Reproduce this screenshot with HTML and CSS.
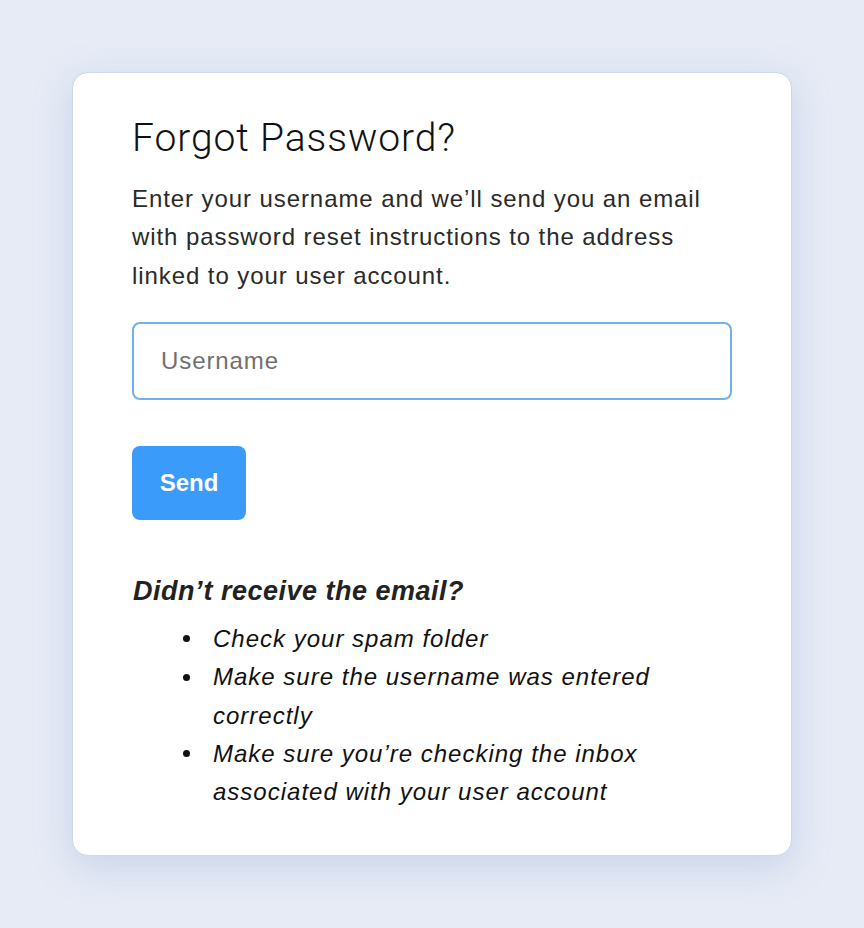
FILE: index.html
```html
<!DOCTYPE html>
<html lang="en">
<head>
<meta charset="utf-8">
<title>Forgot Password</title>
<link rel="stylesheet" href="styles.css">
</head>
<body>
<main class="page">
  <section class="card">
    <h1 class="title">Forgot Password?</h1>
    <p class="intro">Enter your username and we’ll send you an email with password reset instructions to the address linked to your user account.</p>
    <input class="field" type="text" placeholder="Username">
    <button class="send" type="button">Send</button>
    <h2 class="help-title">Didn’t receive the email?</h2>
    <ul class="help-list">
      <li>Check your spam folder</li>
      <li>Make sure the username was entered correctly</li>
      <li>Make sure you’re checking the inbox associated with your user account</li>
    </ul>
  </section>
</main>
</body>
</html>
```

FILE: styles.css
```css
html, body {
  margin: 0;
  padding: 0;
}
body {
  background: #e6ebf6;
  font-family: "Liberation Sans", Arial, sans-serif;
  color: #222;
}
.page {
  padding: 72px;
  min-height: 928px;
  box-sizing: border-box;
}
.card {
  width: 720px;
  height: 784px;
  box-sizing: border-box;
  background: #fff;
  border: 1px solid #cdd6ea;
  border-radius: 16px;
  box-shadow: 0 10px 36px rgba(150, 165, 205, 0.35);
  padding: 42px 59px 0;
  display: flex;
  flex-direction: column;
  align-items: stretch;
}
.title {
  margin: 0;
  font-family: Roboto, "Liberation Sans", sans-serif;
  font-weight: 300;
  font-size: 39px;
  line-height: 46px;
  letter-spacing: 0.9px;
  color: #111;
}
.intro {
  margin: 19px 0 0;
  font-size: 24px;
  line-height: 38.4px;
  letter-spacing: 0.92px;
  color: #2a2a2a;
}
.field {
  margin-top: 27px;
  width: 600px;
  height: 78px;
  box-sizing: border-box;
  border: 2px solid #6fb0ee;
  border-radius: 8px;
  padding: 0 27px;
  font-family: "Liberation Sans", Arial, sans-serif;
  font-size: 24px;
  letter-spacing: 0.9px;
  color: #222;
  outline: none;
}
.field::placeholder {
  color: #707070;
}
.send {
  align-self: flex-start;
  margin-top: 46px;
  width: 114px;
  height: 74px;
  border: none;
  border-radius: 8px;
  background: #3a9bfa;
  color: #fff;
  font-family: "Liberation Sans", Arial, sans-serif;
  font-weight: 700;
  font-size: 24px;
  padding: 0;
}
.help-title {
  margin: 54px 0 0;
  padding-left: 1px;
  font-size: 27px;
  line-height: 34px;
  font-weight: 700;
  font-style: italic;
  letter-spacing: 0.5px;
  color: #222;
}
.help-list {
  margin: 11.5px 0 0;
  padding: 0 0 0 51px;
  list-style: none;
  font-style: italic;
  font-size: 24px;
  line-height: 38.4px;
  letter-spacing: 1.0px;
  color: #111;
}
.help-list li {
  display: grid;
  grid-template-columns: 30px 1fr;
}
.help-list li::before {
  content: "";
  width: 7px;
  height: 7px;
  margin-top: 15.5px;
  border-radius: 50%;
  background: #111;
}
```
